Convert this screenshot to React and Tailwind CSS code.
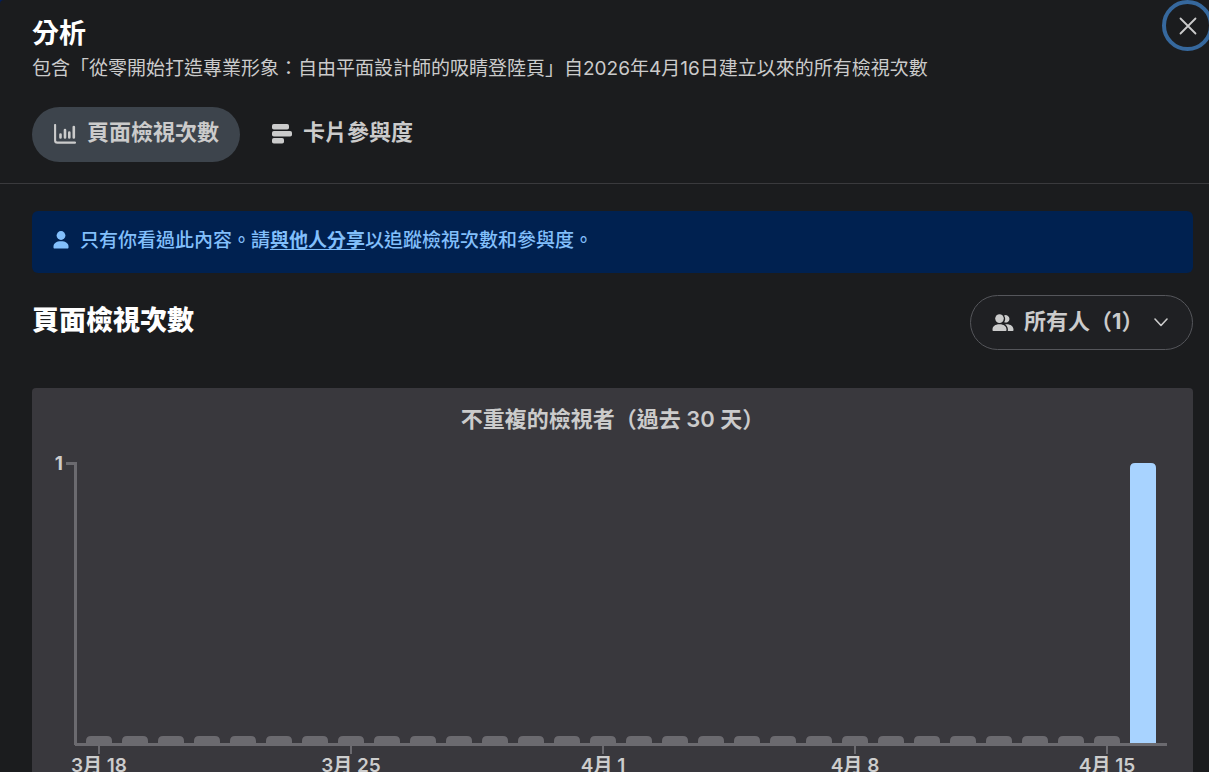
import React, { useState } from 'react';

const TABS = [
  { id: 'views', label: '頁面檢視次數', Icon: ChartIcon },
  { id: 'engagement', label: '卡片參與度', Icon: CardsIcon },
];

// one entry per day, starting on March 18
const VIEWERS = [...Array(29).fill(0), 1];
const DATE_LABELS = { 0: '3月 18', 7: '3月 25', 14: '4月 1', 21: '4月 8', 28: '4月 15' };

function ChartIcon() {
  return (
    <svg width="22" height="20" viewBox="0 0 22 20" fill="none" stroke="currentColor" strokeLinecap="round" aria-hidden="true">
      <path d="M1.1 1v15.4a2.2 2.2 0 0 0 2.2 2.2H21" strokeWidth="2.1" />
      <path d="M6.500 10.500v3M11 6v7.500M15.300 8.500v5M19.800 3v10.500" strokeWidth="2.6" />
    </svg>
  );
}

function CardsIcon() {
  return (
    <svg width="20" height="20" viewBox="0 0 20 20" fill="currentColor" aria-hidden="true">
      <rect x="0" y="0" width="17" height="5.5" rx="1.8" />
      <rect x="0" y="7" width="20" height="5.5" rx="1.8" />
      <rect x="0" y="14" width="12" height="5.5" rx="1.8" />
    </svg>
  );
}

function PersonIcon() {
  return (
    <svg width="16" height="18" viewBox="0 0 16 18" fill="currentColor" aria-hidden="true">
      <circle cx="8" cy="4.5" r="4.4" />
      <path d="M.5 15.5C.5 12.300 3.400 10.300 8 10.300s7.500 2 7.500 5.200v1c0 .6-.4 1-1 1h-13c-.6 0-1-.4-1-1z" />
    </svg>
  );
}

function PeopleIcon() {
  return (
    <svg width="22" height="18" viewBox="0 0 22 18" fill="currentColor" className="shrink-0" aria-hidden="true">
      <circle cx="7.500" cy="4.600" r="4.300" />
      <path d="M.5 15.600c0-3.200 2.600-5.300 7-5.300s7 2.100 7 5.300v.7c0 .5-.3.800-.8.800H1.300c-.5 0-.8-.3-.8-.8z" />
      <path d="M12 1.600A3.700 3.700 0 1 1 12.200 8.200 6 6 0 0 0 12 1.600z" />
      <path d="M13.200 10.400c4.900-.6 8.300 1.700 8.300 5.200v.7c0 .5-.3.800-.8.800h-4.900c.6-2.700-.4-5.100-2.600-6.700z" />
    </svg>
  );
}

function ViewersChart() {
  return (
    <svg viewBox="0 0 1161 360" className="block w-full h-auto" role="img" aria-label="不重複的檢視者">
      <g fill="#6b6a6f">
        <rect x="34" y="22" width="11" height="3" />
        <rect x="42" y="22" width="3" height="283" />
        <rect x="43" y="303" width="1092" height="3" />
      </g>
      {VIEWERS.map((count, i) => {
        const x = 54 + i * 36;
        const top = count > 0 ? 23 : 296;
        return (
          <path
            key={i}
            d={`M${x} 303V${top + 5}q0-5 5-5h16q5 0 5 5V303z`}
            fill={count > 0 ? '#a8d3ff' : '#6b6a6f'}
          />
        );
      })}
      <text x="31" y="30" textAnchor="end" className="text-[19px] font-bold" fill="#cdcdcd">1</text>
      {Object.entries(DATE_LABELS).map(([day, label]) => (
        <g key={day}>
          <rect x={66 + day * 36} y="306" width="2" height="8" fill="#6b6a6f" />
          <text x={67 + day * 36} y="332" textAnchor="middle" className="text-[19px] font-semibold" fill="#cdcdcd">{label}</text>
        </g>
      ))}
    </svg>
  );
}

function App() {
  const [tab, setTab] = useState('views');

  return (
    <div className="h-screen overflow-hidden bg-[#001d5c]">
      <div
        lang="zh-TW"
        className="min-h-full rounded-tl bg-[#1b1c1e] text-[#cbcbcb] font-[Inter,'Noto_Sans_CJK_TC',sans-serif]"
      >
        <header className="border-b border-[#3a3a3d] pb-[21px]">
          <div className="flex items-start justify-between pl-8">
            <div className="pt-[17px]">
              <h1 className="text-[27px] leading-[34px] font-bold text-white">分析</h1>
              <p className="mt-1 text-[19px] leading-7">
                包含「從零開始打造專業形象：自由平面設計師的吸睛登陸頁」自2026年4月16日建立以來的所有檢視次數
              </p>
            </div>
            <button
              type="button"
              aria-label="關閉"
              className="-mr-1 flex size-[51px] shrink-0 items-center justify-center rounded-full border-4 border-[#36689d]"
            >
              <svg width="18" height="18" viewBox="0 0 18 18" stroke="currentColor" strokeWidth="1.800" strokeLinecap="round" aria-hidden="true">
                <path d="M1.500 1.500l15 15M16.500 1.500l-15 15" />
              </svg>
            </button>
          </div>
          <div role="tablist" className="mt-6 flex gap-2.5 pl-8">
            {TABS.map(({ id, label, Icon }) => (
              <button
                key={id}
                type="button"
                role="tab"
                aria-selected={tab === id}
                onClick={() => setTab(id)}
                className={`flex h-[55px] items-center gap-[11px] rounded-full pr-[21px] pl-[22px] pb-[2px] text-[22px] leading-8 font-bold ${tab === id ? 'bg-[#3d444c]' : ''}`}
              >
                <Icon />
                <span className="pb-1">{label}</span>
              </button>
            ))}
          </div>
        </header>

        <main className="pt-[27px] pr-4 pl-8">
          <div className="flex items-start gap-[11px] rounded-md bg-[#002150] px-[21px] pt-4 pb-[18px] text-[19px] leading-7 font-medium text-[#82bffb]">
            <span className="pt-1"><PersonIcon /></span>
            <p>
              只有你看過此內容。請<a href="#share" className="font-bold underline underline-offset-2">與他人分享</a>以追蹤檢視次數和參與度。
            </p>
          </div>

          <div className="mt-[22px] flex items-start justify-between">
            <h2 className="pt-[9px] text-[27px] leading-[34px] font-black text-white">頁面檢視次數</h2>
            <label className="flex h-[55px] items-center rounded-full border border-[#55565b] bg-[#1f2023] pr-6 pl-[21px]">
              <PeopleIcon />
              <select
                aria-label="檢視者"
                className="ml-2.5 appearance-none bg-transparent pb-1 text-[22px] leading-8 font-bold outline-none"
              >
                <option>所有人（1）</option>
              </select>
              <svg width="14" height="9" viewBox="0 0 14 9" fill="none" stroke="currentColor" strokeWidth="1.600" strokeLinecap="round" strokeLinejoin="round" className="ml-2.5 shrink-0 pointer-events-none" aria-hidden="true">
                <path d="M1 1l6 6.500L13 1" />
              </svg>
            </label>
          </div>

          <section className="mt-[38px] rounded bg-[#39383d] pt-[15px]">
            <h3 className="mb-[5px] text-center text-[22px] leading-8 font-semibold">不重複的檢視者（過去 30 天）</h3>
            <ViewersChart />
          </section>
        </main>
      </div>
    </div>
  );
}

export default App;
